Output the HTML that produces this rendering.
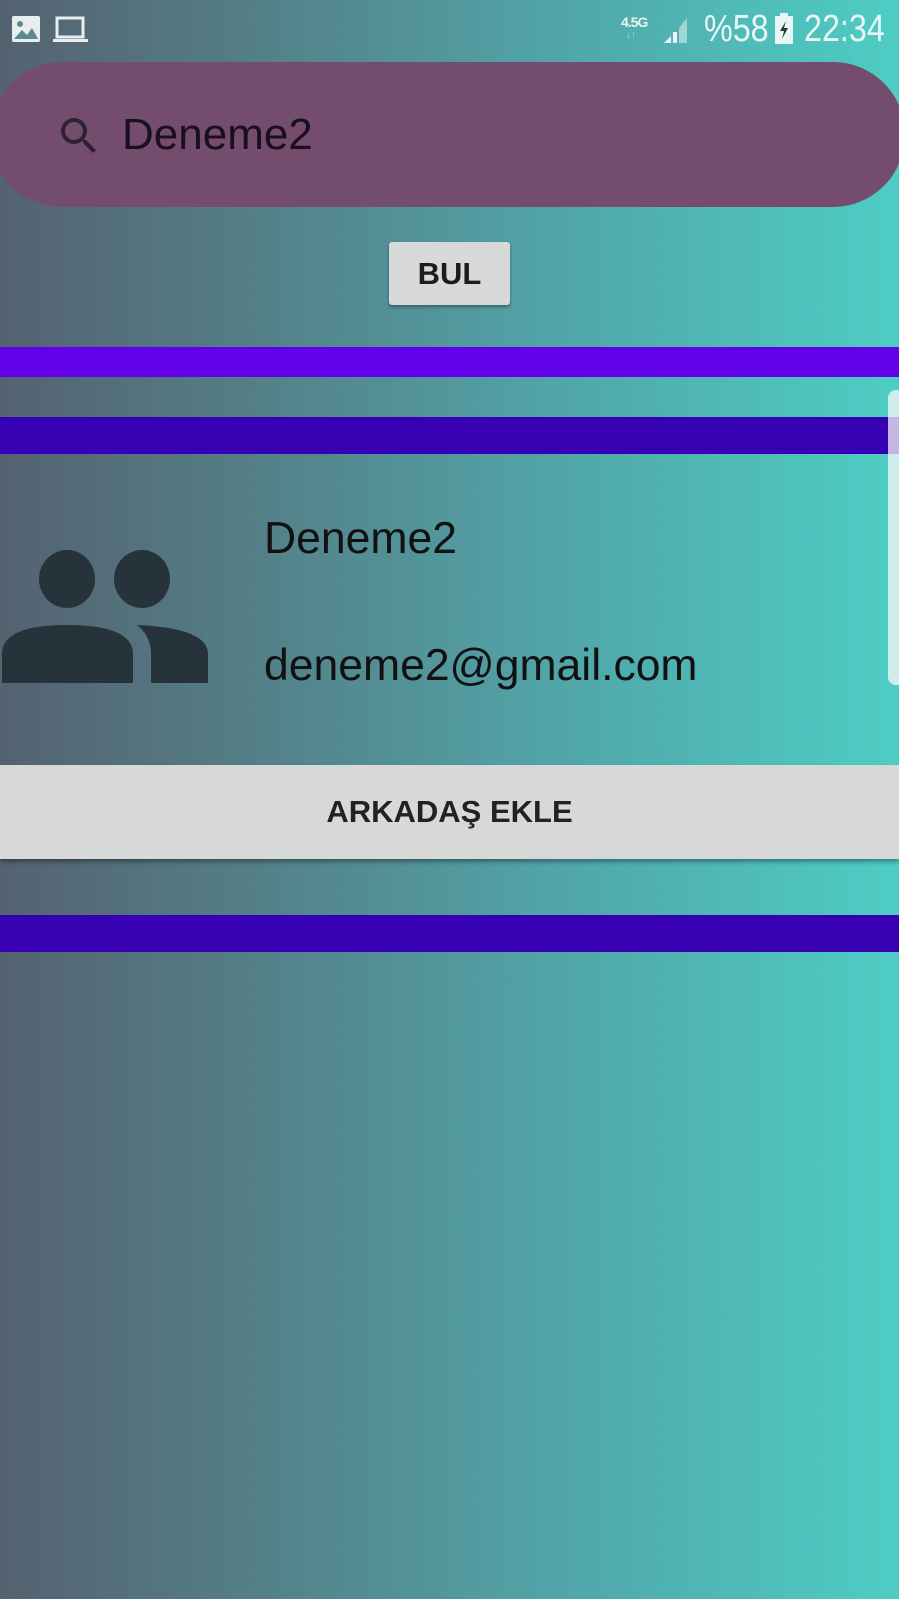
<!DOCTYPE html>
<html><head><meta charset="utf-8"><style>
*{margin:0;padding:0;box-sizing:border-box}
body{width:899px;height:1599px;overflow:hidden;position:relative;font-family:"Liberation Sans",sans-serif;
background:linear-gradient(90deg,#546270 0%,#548189 30%,#51a3a7 60%,#4ecdc5 100%);}
.a{position:absolute}
</style></head><body>
<svg class="a" style="left:11px;top:15px" width="30" height="28" viewBox="0 0 30 28"><rect x="1" y="1" width="28" height="26" rx="2" fill="#e8eef0"/><circle cx="9" cy="9" r="3" fill="#5a8a90"/><path d="M3 24 L11 15 L16 20 L21 13 L27 24Z" fill="#5a8a90"/></svg>
<svg class="a" style="left:53px;top:16px" width="36" height="28" viewBox="0 0 36 28"><rect x="4" y="2" width="26" height="19" fill="none" stroke="#e8eef0" stroke-width="3"/><rect x="0" y="23" width="35" height="3" fill="#e8eef0"/></svg>
<div class="a" style="left:621px;top:14px;color:#e8f4f4;font-size:14px;font-weight:bold;letter-spacing:-1px">4.5G</div>
<div class="a" style="left:626px;top:30px;color:#a8d8d8;font-size:10px">↓↑</div>
<svg class="a" style="left:661px;top:14px" width="30" height="30" viewBox="0 0 30 30"><path d="M3 29 L10 22 L10 29Z" fill="#eef"/><rect x="12" y="18" width="4" height="11" fill="#eef"/><path d="M18 14 L26 4 L26 29 L18 29Z" fill="#9fd6d4"/></svg>
<div class="a" style="left:704px;top:8px;color:#e8f6f6;font-size:38px;transform:scaleX(.85);transform-origin:left">%58</div>
<svg class="a" style="left:774px;top:13px" width="20" height="32" viewBox="0 0 20 32"><rect x="6" y="0" width="8" height="4" fill="#e8f6f6"/><rect x="1" y="3" width="18" height="28" rx="1" fill="#e8f6f6"/><path d="M12 8 L6 18 L10 18 L8 26 L14 15 L10 15Z" fill="#333"/></svg>
<div class="a" style="left:804px;top:8px;color:#e8f6f6;font-size:38px;transform:scaleX(.85);transform-origin:left">22:34</div>
<div class="a" style="left:-10px;top:62px;width:915px;height:145px;border-radius:72px;background:#744c6e"></div>
<svg class="a" style="left:55px;top:112px" width="48" height="48" viewBox="0 0 24 24"><path fill="#2e2232" d="M15.5 14h-.79l-.28-.27A6.47 6.47 0 0 0 16 9.5 6.5 6.5 0 1 0 9.5 16c1.61 0 3.09-.59 4.23-1.57l.27.28v.79l5 4.99L20.49 19l-4.99-5zm-6 0C7.01 14 5 11.99 5 9.5S7.01 5 9.5 5 14 7.01 14 9.5 11.99 14 9.5 14z"/></svg>
<div class="a" style="left:122px;top:110px;font-size:44px;color:#1a0f1c">Deneme2</div>
<div class="a" style="left:389px;top:242px;width:121px;height:63px;background:#d7d8d8;border-radius:3px;box-shadow:0 2px 3px rgba(0,0,0,.35);text-align:center;line-height:63px;font-size:31px;font-weight:bold;color:#1c1c1c">BUL</div>
<div class="a" style="left:0;top:347px;width:899px;height:30px;background:#6200ea"></div>
<div class="a" style="left:888px;top:390px;width:20px;height:295px;border-radius:8px;background:#cdeeec"></div>
<div class="a" style="left:0;top:417px;width:888px;height:37px;background:#3700b3"></div>
<div class="a" style="left:888px;top:417px;width:11px;height:37px;background:#c6b4e6"></div>
<svg class="a" style="left:0;top:548px" width="212" height="138" viewBox="0 0 212 138"><ellipse cx="67" cy="31" rx="28" ry="29" fill="#26333a"/><ellipse cx="142" cy="31" rx="28" ry="29" fill="#26333a"/><path d="M2 135 L2 106 Q2 77 67 77 Q133 77 133 106 L133 135Z" fill="#26333a"/><path d="M137 77 Q208 80 208 106 L208 135 L151 135 L151 106 Q151 88 137 77Z" fill="#26333a"/></svg>
<div class="a" style="left:264px;top:514px;font-size:44.5px;color:#111">Deneme2</div>
<div class="a" style="left:264px;top:641px;font-size:44.5px;color:#111">deneme2@gmail.com</div>
<div class="a" style="left:0;top:765px;width:899px;height:94px;background:#d7d8d8;box-shadow:0 3px 4px rgba(0,0,0,.35);text-align:center;line-height:94px;font-size:31px;font-weight:bold;color:#222">ARKADAŞ EKLE</div>
<div class="a" style="left:0;top:915px;width:899px;height:37px;background:#3700b3"></div>
</body></html>
